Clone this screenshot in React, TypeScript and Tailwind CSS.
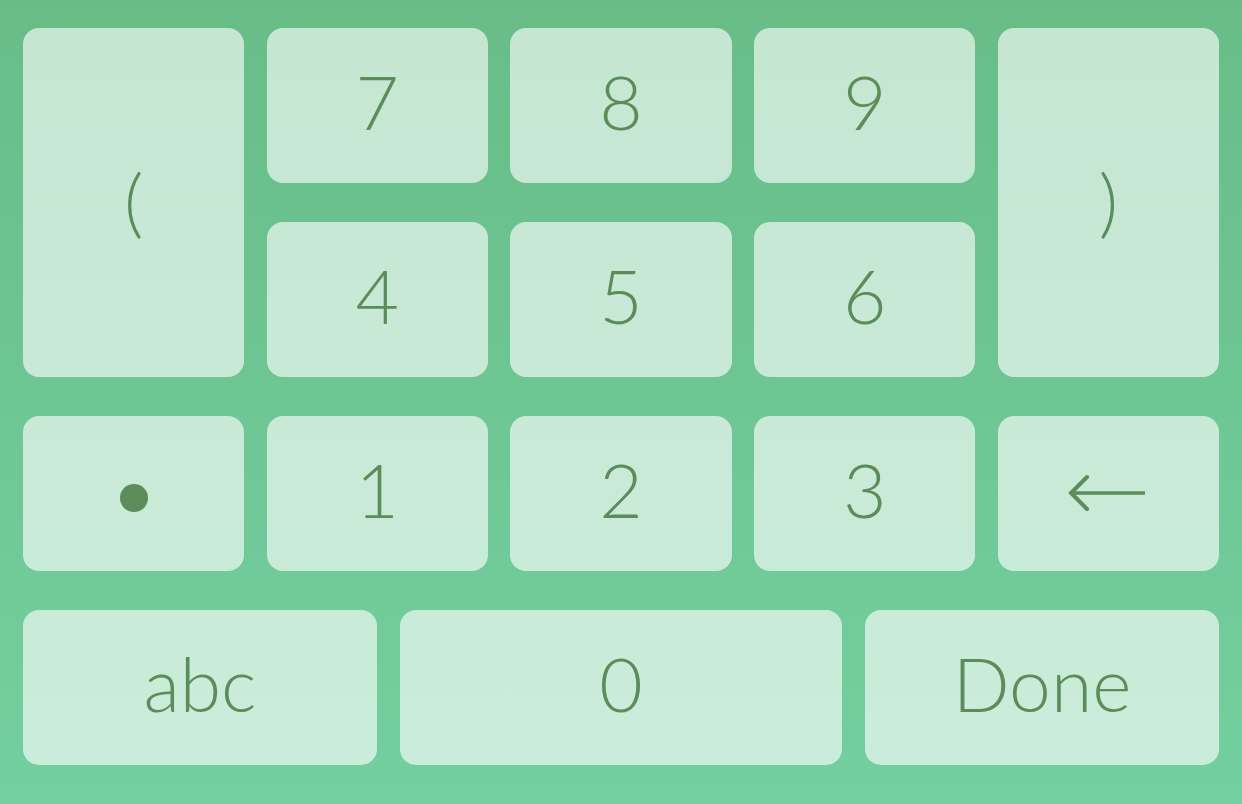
import React from 'react';

const font = { fontFamily: 'Lato, "Open Sans", sans-serif' };

const Key: React.FC<{ className?: string; children?: React.ReactNode }> = ({ className = '', children }) => (
  <button
    className={`flex items-center justify-center rounded-[16px] bg-white/[0.62] text-[#5b8c59] text-[75px] font-light leading-none ${className}`}
  >
    {children}
  </button>
);

const App: React.FC = () => {
  return (
    <div
      className="w-[1242px] h-[804px] bg-linear-to-b from-[#68bd87] to-[#74cfa0] px-[23px] pt-[28px] pb-[39px] flex flex-col gap-[39px]"
      style={font}
    >
      <div className="grid grid-cols-5 grid-rows-[155px_155px_155px] gap-x-[22.5px] gap-y-[39px]">
        <Key className="row-span-2 pb-[4px]">(</Key>
        <Key className="pb-[8px]">7</Key>
        <Key className="pb-[8px]">8</Key>
        <Key className="pb-[8px]">9</Key>
        <Key className="row-span-2 pb-[4px]">)</Key>
        <Key className="pb-[8px]">4</Key>
        <Key className="pb-[8px]">5</Key>
        <Key className="pb-[8px]">6</Key>
        <Key className="pt-[8px]">
          <span className="block w-[28px] h-[28px] rounded-full bg-[#5b8c59]" />
        </Key>
        <Key className="pb-[8px]">1</Key>
        <Key className="pb-[8px]">2</Key>
        <Key className="pb-[8px]">3</Key>
        <Key>
          <svg width="80" height="40" viewBox="0 0 80 40" fill="none" stroke="#5b8c59" strokeWidth="4">
            <path d="M3 19 H77" strokeWidth="3.5" />
            <path d="M19 3 L3 19 L19 35" strokeLinecap="round" strokeLinejoin="miter" />
          </svg>
        </Key>
      </div>
      <div className="flex gap-[23px] h-[155px]">
        <Key className="w-[354px] pb-[8px]">abc</Key>
        <Key className="flex-1 pb-[8px]">0</Key>
        <Key className="w-[354px] pb-[8px]">Done</Key>
      </div>
    </div>
  );
};

export default App;
